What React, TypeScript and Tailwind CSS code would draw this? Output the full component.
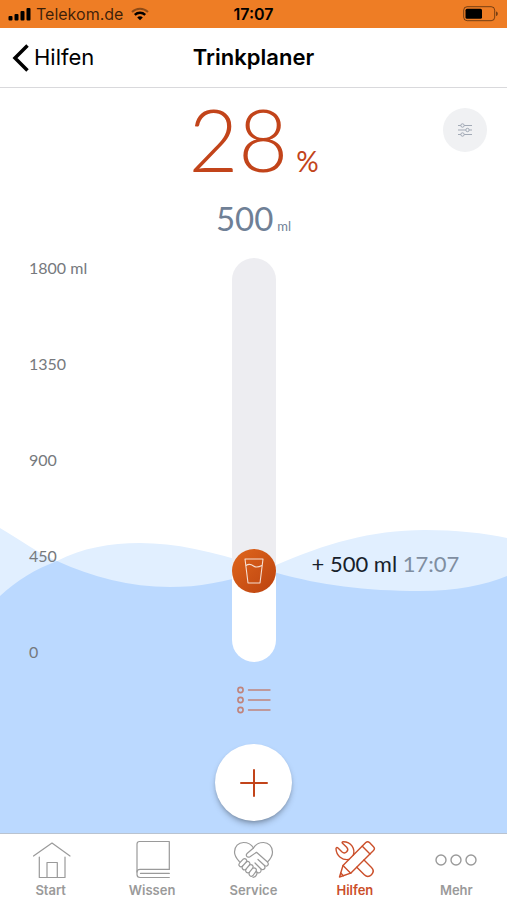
import React from "react";

interface IconProps {
  className?: string;
}

interface TabItem {
  label: string;
  icon: React.FC<IconProps>;
  active?: boolean;
}

const SCALE = ["1800 ml", "1350", "900", "450", "0"];

const SignalIcon: React.FC<IconProps> = ({ className = "" }) => (
  <svg viewBox="0 0 24 14" className={className} fill="currentColor" aria-hidden="true">
    <rect x="0.500" y="9" width="4" height="4.500" rx="1" />
    <rect x="6.500" y="7" width="4" height="6.500" rx="1" />
    <rect x="12.500" y="4" width="4" height="9.500" rx="1" />
    <rect x="18.500" y="1" width="4" height="12.500" rx="1" />
  </svg>
);

const WifiIcon: React.FC<IconProps> = ({ className = "" }) => (
  <svg viewBox="0 0 18 14" className={className} fill="none" stroke="currentColor" aria-hidden="true">
    <path d="M1 5C5.500 .5 12.500.5 17 5" strokeWidth="2" opacity="0.4" />
    <path d="M3.800 7.800C6.800 5 11.200 5 14.200 7.800" strokeWidth="2.400" />
    <path d="M9 13.200L6.200 10.400C7.800 9 10.200 9 11.800 10.400Z" fill="currentColor" stroke="none" />
  </svg>
);

const BatteryIcon: React.FC<IconProps> = ({ className = "" }) => (
  <svg viewBox="0 0 36 16" className={className} aria-hidden="true">
    <rect x="0.700" y="0.700" width="31" height="14" rx="3.500" fill="none" stroke="currentColor" strokeWidth="1" opacity="0.5" />
    <rect x="2.500" y="2.700" width="16.500" height="10" rx="1.500" fill="currentColor" />
    <path d="M33 5.500C35.400 6 35.400 9.500 33 10Z" fill="currentColor" opacity="0.5" />
  </svg>
);

const BackIcon: React.FC<IconProps> = ({ className = "" }) => (
  <svg viewBox="0 0 18 30" className={className} fill="none" stroke="currentColor" strokeWidth="3.500" aria-hidden="true">
    <path d="M15.500 2.500L3 15L15.500 27.500" />
  </svg>
);

const SlidersIcon: React.FC<IconProps> = ({ className = "" }) => (
  <svg viewBox="0 0 14 14" className={className} fill="none" stroke="currentColor" strokeWidth="0.900" aria-hidden="true">
    <path d="M0 2.500H2.700M6.300 2.500H14M0 7H7.700M11.300 7H14M0 11.500H2.700M6.300 11.500H14" />
    <circle cx="4.500" cy="2.500" r="1.700" />
    <circle cx="9.500" cy="7" r="1.700" />
    <circle cx="4.500" cy="11.500" r="1.700" />
  </svg>
);

const GlassIcon: React.FC<IconProps> = ({ className = "" }) => (
  <svg viewBox="0 0 20 26" className={className} fill="none" stroke="currentColor" strokeWidth="1.100" strokeLinejoin="round" aria-hidden="true">
    <path d="M1 1H19L16 25H4Z" />
    <path d="M2 7.500C5 5.500 7.500 6.500 9.500 8S15 9 18 7.500" />
  </svg>
);

const ListIcon: React.FC<IconProps> = ({ className = "" }) => (
  <svg viewBox="0 0 34 28" className={className} fill="none" stroke="currentColor" strokeLinecap="round" aria-hidden="true">
    <g strokeWidth="1.600">
      <circle cx="3.500" cy="4" r="2.600" />
      <circle cx="3.500" cy="14" r="2.600" />
      <circle cx="3.500" cy="24" r="2.600" />
    </g>
    <path d="M11.500 4H33M11.500 14H33M11.500 24H33" strokeWidth="1.400" />
  </svg>
);

const PlusIcon: React.FC<IconProps> = ({ className = "" }) => (
  <svg viewBox="0 0 28 28" className={className} fill="none" stroke="currentColor" strokeWidth="2" strokeLinecap="round" aria-hidden="true">
    <path d="M14 1V27M1 14H27" />
  </svg>
);

const HomeIcon: React.FC<IconProps> = ({ className = "" }) => (
  <svg viewBox="0 0 40 40" className={className} fill="none" stroke="currentColor" strokeWidth="1.200" strokeLinecap="round" strokeLinejoin="round" aria-hidden="true">
    <path d="M2.500 16L21 3L39 16" />
    <path d="M8.300 17V37.500H34V17" />
    <path d="M16 37.500V22.500H26.300V37.500" />
  </svg>
);

const BookIcon: React.FC<IconProps> = ({ className = "" }) => (
  <svg viewBox="0 0 40 40" className={className} fill="none" stroke="currentColor" strokeWidth="1.200" strokeLinecap="round" strokeLinejoin="round" aria-hidden="true">
    <path d="M37.300 29.300V1.500H7.500C6 1.500 5 2.500 5 4V34.500C5 36.500 6 37.500 8 37.500H37.300" />
    <path d="M37.300 29.300H8C6 29.300 5 30.300 5 32" />
    <path d="M8.500 33.400H37.300" />
  </svg>
);

const HeartHandsIcon: React.FC<IconProps> = ({ className = "" }) => (
  <svg viewBox="0 0 40 40" className={className} fill="none" stroke="currentColor" strokeWidth="1.200" strokeLinecap="round" strokeLinejoin="round" aria-hidden="true">
    <path d="M6.300 21.500C3.500 18.500 1.500 15.500 1.500 12C1.500 6.500 5.500 2.500 10.500 2.500C15 2.500 18.500 4.500 20.500 8C22.500 4.500 26 2.500 30.500 2.500C35.500 2.500 39.500 6.500 39.500 12C39.500 16 37.500 19 34.500 22" />
    <path d="M20.500 8L14.300 13.200C12 15.300 14.300 18.300 17 16.700L23.500 12.300L34.500 22C36.500 24.500 34 27.300 31.500 25.500L25 19.500" />
    <path d="M31.500 25.500C33 28.500 30.500 30.800 28 29L22 23" />
    <path d="M28 29C28.800 32 26.300 34 24 32.200L23 31.300" />
    <path d="M24 32.200C24.300 34.500 22.500 37.300 20 37.300" />
    <path d="M6.500 23L10 19.300C12.300 17.500 14.800 20 13.300 22L9.600 26C7.300 28 4.700 25.300 6.500 23Z" />
    <path d="M13.300 22C15.500 20.500 18 23 16.500 25L13 29.200C10.700 31 8 28.500 9.600 26" />
    <path d="M16.500 25C18.700 23.700 21.200 26 19.700 28.200L16.500 32.200C14.200 34 11.600 31.500 13 29.200" />
    <path d="M19.700 28.200C22 27 24.200 29.300 23 31.300L20 35.500C17.800 37.500 15 34.800 16.500 32.200" />
  </svg>
);

const ToolsIcon: React.FC<IconProps> = ({ className = "" }) => (
  <svg viewBox="0 0 42 40" className={className} fill="none" stroke="currentColor" strokeWidth="1.400" strokeLinecap="round" strokeLinejoin="round" aria-hidden="true">
    <path d="M5.500 37L9 25.500L31.800 2.600C33 1.400 34.300 1.400 35.500 2.600L39.500 6.700C40.700 7.900 40.700 9.200 39.500 10.400L16.700 33.200Z" />
    <path d="M9 25.500L16.700 33.200" />
    <path d="M28.300 6.200L36 13.900M6.800 33L9.300 35.700" />
    <path d="M19.300 15.100C21.300 9 17.500 1.800 9.300 1.700C8 1.700 7.800 2.500 8.500 3.200L12.700 7.300C14.300 9 14 10.500 12.700 11.800C11.300 13.200 9.300 13.200 7.800 11.800L4 8C3 7 2 7.500 2 8.800C2.300 16 8.500 20.500 14.800 19.500" />
    <path d="M30 20L37.500 27.500C39.700 29.700 39.700 32.500 37.500 34.700C35.300 36.900 32.500 36.900 30.300 34.700L22.800 27.200" />
  </svg>
);

const MoreIcon: React.FC<IconProps> = ({ className = "" }) => (
  <svg viewBox="0 0 42 40" className={className} fill="none" stroke="currentColor" strokeWidth="1.400" aria-hidden="true">
    <circle cx="6" cy="20" r="5" />
    <circle cx="21" cy="20" r="5" />
    <circle cx="36" cy="20" r="5" />
  </svg>
);

const TABS: TabItem[] = [
  { label: "Start", icon: HomeIcon },
  { label: "Wissen", icon: BookIcon },
  { label: "Service", icon: HeartHandsIcon },
  { label: "Hilfen", icon: ToolsIcon, active: true },
  { label: "Mehr", icon: MoreIcon },
];

const WAVE_FALLING =
  "M0 8C20 20 38 33 57 41C92 57 130 67 170 67C205 67 235 60 276 45C325 24 370 10 425 10C455 10 485 13 507 18V313H0Z";
const WAVE_RISING =
  "M0 76C17 60 36 49 57 41C82 28 110 23 140 23C180 23 225 34 277 53C320 65 365 71 420 71C455 71 485 65 507 56V313H0Z";

const Waves: React.FC<IconProps> = ({ className = "" }) => (
  <svg viewBox="0 0 507 313" preserveAspectRatio="none" className={className} aria-hidden="true">
    <clipPath id="rising-wave">
      <path d={WAVE_RISING} />
    </clipPath>
    <path d={WAVE_FALLING} fill="#e1efff" />
    <path d={WAVE_RISING} fill="#e1efff" />
    <path d={WAVE_FALLING} fill="#bbd9ff" clipPath="url(#rising-wave)" />
  </svg>
);

const StatusBar: React.FC = () => (
  <div className="grid h-7 grid-cols-[1fr_auto_1fr] items-center bg-[#ee7d25] px-2 text-black">
    <div className="flex items-center gap-1">
      <SignalIcon className="h-3.5 w-6" />
      <span className="text-base text-black/75">Telekom.de</span>
      <WifiIcon className="ml-1 h-3.5 w-[18px]" />
    </div>
    <span className="text-base font-semibold">17:07</span>
    <BatteryIcon className="h-4 w-9 justify-self-end" />
  </div>
);

const Header: React.FC = () => (
  <header className="grid h-[60px] grid-cols-[1fr_auto_1fr] items-center border-b border-[#d9d9dc] bg-white px-3 text-[22px] text-black">
    <a href="#hilfen" className="flex items-center gap-1">
      <BackIcon className="h-[30px] w-[18px]" />
      Hilfen
    </a>
    <h1 className="font-semibold">Trinkplaner</h1>
  </header>
);

const Summary: React.FC = () => (
  <div className="font-[Lato,sans-serif]">
    <div className="grid grid-cols-[1fr_auto_1fr] items-start px-5">
      <p className="col-start-2 flex items-baseline gap-2 text-[#c2441a]">
        <span className="text-[86px] leading-[102px] font-light">28</span>
        <span className="text-[28px]">%</span>
      </p>
      <button
        type="button"
        aria-label="Einstellungen"
        className="mt-5 flex size-11 items-center justify-center justify-self-end rounded-full bg-[#f0f1f3] text-gray-400"
      >
        <SlidersIcon className="size-3.5" />
      </button>
    </div>
    <p className="flex items-baseline justify-center gap-1 text-[#6f8096]">
      <span className="text-[33px] leading-[56px]">500</span>
      <span className="text-[13px]">ml</span>
    </p>
  </div>
);

const Gauge: React.FC = () => (
  <div className="mt-3 grid min-h-[403px] flex-1 grid-cols-[1fr_auto_1fr] px-[29px] font-[Lato,sans-serif]">
    <ul className="flex flex-col justify-between text-base leading-5 text-[#76797d]">
      {SCALE.map((mark) => (
        <li key={mark}>{mark}</li>
      ))}
    </ul>
    <div className="flex w-11 flex-col overflow-hidden rounded-full bg-white">
      <div className="flex-1 bg-[#ededf1]" />
      <div className="bg-linear-to-b from-[#ededf1] from-50% to-white to-50%">
        <button
          type="button"
          aria-label="Getränk"
          className="flex size-11 items-center justify-center rounded-full bg-linear-to-br from-[#e0661c] to-[#bb420f] text-white/80"
        >
          <GlassIcon className="h-[26px] w-5" />
        </button>
      </div>
      <div className="h-[69px]" />
    </div>
    <p className="self-end pb-[84px] pl-9 text-[22px] leading-7 whitespace-nowrap text-[#17212b]">
      + 500 ml <time className="text-[#7f8ea1]">17:07</time>
    </p>
  </div>
);

const TabBar: React.FC = () => (
  <nav className="grid grid-cols-5 border-t border-[#b9c3d0] bg-white pt-1.5">
    {TABS.map(({ label, icon: Icon, active }) => (
      <a
        key={label}
        href={`#${label.toLowerCase()}`}
        aria-current={active ? "page" : undefined}
        className={`flex flex-col items-center text-[13px] leading-5 font-semibold ${
          active ? "text-[#cb4f2a]" : "text-[#9a9a9a]"
        }`}
      >
        <Icon className="h-10 w-[42px]" />
        {label}
      </a>
    ))}
  </nav>
);

export default function App() {
  return (
    <div className="flex min-h-screen flex-col bg-white font-[Inter,sans-serif]">
      <StatusBar />
      <Header />
      <main className="relative isolate flex flex-1 flex-col pb-3">
        <Waves className="absolute inset-x-0 bottom-0 -z-10 h-[313px] w-full" />
        <Summary />
        <Gauge />
        <div className="flex flex-col items-center gap-[30px] pt-6">
          <button type="button" aria-label="Liste" className="text-[#c0847c]">
            <ListIcon className="h-7 w-[34px]" />
          </button>
          <button
            type="button"
            aria-label="Hinzufügen"
            className="flex size-[77px] items-center justify-center rounded-full bg-white text-[#c2441a] shadow-md shadow-black/25"
          >
            <PlusIcon className="size-7" />
          </button>
        </div>
      </main>
      <TabBar />
    </div>
  );
}
